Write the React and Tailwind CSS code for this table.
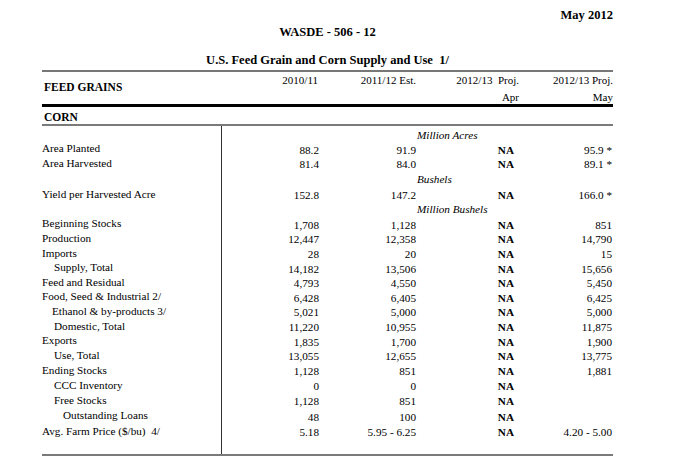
import React from "react";

const rows = [
  { unit: "Million Acres", h: "h-[15px]", pt: "pt-[3px]" },
  { label: "Area Planted", v: ["88.2", "91.9", "NA", "95.9 *"], h: "h-[14px]" },
  { label: "Area Harvested", v: ["81.4", "84.0", "NA", "89.1 *"], h: "h-[15px]" },
  { unit: "Bushels", h: "h-[16px]", pt: "pt-[2px]" },
  { label: "Yield per Harvested Acre", v: ["152.8", "147.2", "NA", "166.0 *"], h: "h-[15px]" },
  { unit: "Million Bushels", h: "h-[15px]", pt: "pt-[1px]" },
  { label: "Beginning Stocks", v: ["1,708", "1,128", "NA", "851"], h: "h-[14px]" },
  { label: "Production", v: ["12,447", "12,358", "NA", "14,790"], h: "h-[15px]" },
  { label: "Imports", v: ["28", "20", "NA", "15"], h: "h-[15px]" },
  { label: "Supply, Total", indent: "pl-[12px]", v: ["14,182", "13,506", "NA", "15,656"], h: "h-[14px]" },
  { label: "Feed and Residual", v: ["4,793", "4,550", "NA", "5,450"], h: "h-[15px]" },
  { label: "Food, Seed & Industrial 2/", v: ["6,428", "6,405", "NA", "6,425"], h: "h-[14px]" },
  { label: "Ethanol & by-products 3/", indent: "pl-[10px]", v: ["5,021", "5,000", "NA", "5,000"], h: "h-[15px]" },
  { label: "Domestic, Total", indent: "pl-[12px]", v: ["11,220", "10,955", "NA", "11,875"], h: "h-[15px]" },
  { label: "Exports", v: ["1,835", "1,700", "NA", "1,900"], h: "h-[14px]" },
  { label: "Use, Total", indent: "pl-[12px]", v: ["13,055", "12,655", "NA", "13,775"], h: "h-[15px]" },
  { label: "Ending Stocks", v: ["1,128", "851", "NA", "1,881"], h: "h-[15px]" },
  { label: "CCC Inventory", indent: "pl-[12px]", v: ["0", "0", "NA", ""], h: "h-[15px]" },
  { label: "Free Stocks", indent: "pl-[12px]", v: ["1,128", "851", "NA", ""], h: "h-[15px]" },
  { label: "Outstanding Loans", indent: "pl-[21px]", v: ["48", "100", "NA", ""], h: "h-[16px]" },
  { label: "Avg. Farm Price ($/bu)  4/", v: ["5.18", "5.95 - 6.25", "NA", "4.20 - 5.00"], h: "h-[15px]" },
];

const Row = ({ row }) => {
  if (row.unit) {
    return (
      <div className={`flex ${row.h}`}>
        <div className="w-[180px] border-r border-[#333]" />
        <div className="w-[194px]" />
        <div className={`flex items-center pl-[1px] italic whitespace-nowrap ${row.pt}`}>{row.unit}</div>
      </div>
    );
  }
  return (
    <div className={`flex ${row.h}`}>
      <div className={`w-[180px] flex items-center border-r border-[#333] whitespace-pre ${row.indent || ""}`}>
        {row.label}
      </div>
      <div className="w-[97px] flex items-center justify-end pt-[3px] whitespace-nowrap">{row.v[0]}</div>
      <div className="w-[97px] flex items-center justify-end pt-[3px] whitespace-nowrap">{row.v[1]}</div>
      <div className="w-[99px] flex items-center justify-end pr-[1px] pt-[3px] font-bold">{row.v[2]}</div>
      <div className="w-[97px] flex items-center justify-end pt-[3px] whitespace-nowrap">{row.v[3]}</div>
    </div>
  );
};

export default function App() {
  return (
    <div className="w-[688px] h-[458px] bg-white text-black font-['Liberation_Serif',serif] text-[11.2px] overflow-hidden">
      <div className="ml-[42px] w-[571px]">
        {/* titles */}
        <div className="flex flex-col">
          <div className="mt-[8px] text-right font-bold text-[12.5px] leading-[14px]">May 2012</div>
          <div className="mt-[3px] text-center font-bold text-[12.5px] leading-[14px]">WASDE - 506 - 12</div>
          <div className="mt-[14px] text-center font-bold text-[12.5px] leading-[14px] whitespace-pre">
            U.S. Feed Grain and Corn Supply and Use  1/
          </div>
        </div>

        {/* column header */}
        <div className="mt-[3px] border-t-2 border-[#777]">
          <div className="flex h-[35px] border-b-[3px] border-black leading-[12px]">
            <div className="w-[180px] pt-[8px] pl-[2px] font-bold text-[11.5px] leading-[14px]">FEED GRAINS</div>
            <div className="w-[96px] pt-[2px] text-right text-[11px]">2010/11</div>
            <div className="w-[98px] pt-[2px] text-right text-[11px]">2011/12 Est.</div>
            <div className="w-[103px] pt-[2px] text-right text-[11px] flex flex-col items-end">
              <span className="whitespace-pre">2012/13  Proj.</span>
              <span className="mt-[5px]">Apr</span>
            </div>
            <div className="w-[94px] pt-[2px] text-right text-[11px] flex flex-col items-end">
              <span>2012/13 Proj.</span>
              <span className="mt-[5px]">May</span>
            </div>
          </div>
          <div className="h-[19px] pt-[3px] pl-[2px] font-bold text-[11.5px] leading-[14px] border-b-2 border-[#7a7a7a]">
            CORN
          </div>
        </div>

        {/* body */}
        <div className="leading-[14px]">
          {rows.map((row, i) => (
            <Row key={i} row={row} />
          ))}
          <div className="flex h-[18px] border-b-2 border-[#7a7a7a]">
            <div className="w-[180px] border-r border-[#333]" />
          </div>
        </div>
      </div>
    </div>
  );
}
